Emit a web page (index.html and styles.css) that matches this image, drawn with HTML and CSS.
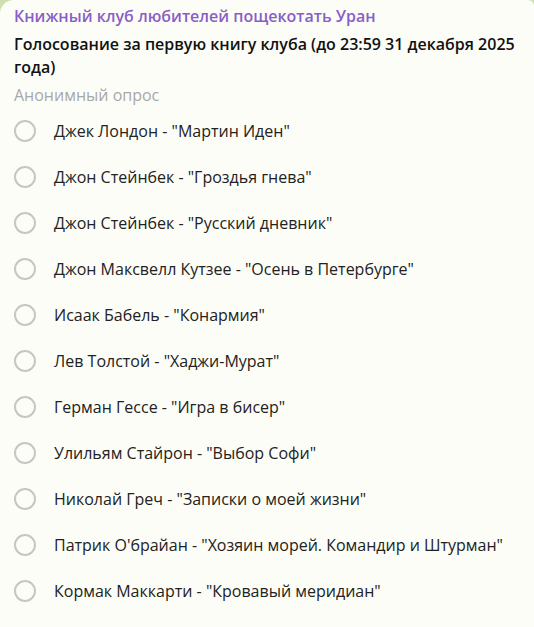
FILE: index.html
```html
<!DOCTYPE html>
<html lang="ru">
<head>
<meta charset="utf-8">
<link rel="stylesheet" href="styles.css">
</head>
<body>
<div class="bubble">
  <div class="author">Книжный клуб любителей пощекотать Уран</div>
  <div class="question">Голосование за первую книгу клуба (до 23:59 31 декабря 2025 года)</div>
  <div class="kind">Анонимный опрос</div>
  <ul class="options">
    <li class="opt"><span class="radio"></span><span>Джек Лондон - "Мартин Иден"</span></li>
    <li class="opt"><span class="radio"></span><span>Джон Стейнбек - "Гроздья гнева"</span></li>
    <li class="opt"><span class="radio"></span><span>Джон Стейнбек - "Русский дневник"</span></li>
    <li class="opt"><span class="radio"></span><span>Джон Максвелл Кутзее - "Осень в Петербурге"</span></li>
    <li class="opt"><span class="radio"></span><span>Исаак Бабель - "Конармия"</span></li>
    <li class="opt"><span class="radio"></span><span>Лев Толстой - "Хаджи-Мурат"</span></li>
    <li class="opt"><span class="radio"></span><span>Герман Гессе - "Игра в бисер"</span></li>
    <li class="opt"><span class="radio"></span><span>Улильям Стайрон - "Выбор Софи"</span></li>
    <li class="opt"><span class="radio"></span><span>Николай Греч - "Записки о моей жизни"</span></li>
    <li class="opt"><span class="radio"></span><span>Патрик О'брайан - "Хозяин морей. Командир и Штурман"</span></li>
    <li class="opt"><span class="radio"></span><span>Кормак Маккарти - "Кровавый меридиан"</span></li>
  </ul>
</div>
</body>
</html>
```
FILE: styles.css
```css
html, body {
  margin: 0;
  padding: 0;
  background: #cfe0ad;
  height: 100%;
}
body {
  font-family: "Open Sans", "Noto Sans", sans-serif;
  overflow: hidden;
}
.bubble {
  background: #fdfdf7;
  min-height: 627px;
  border-radius: 14px 6px 0 0;
  padding: 5px 14px 0 14px;
  box-sizing: border-box;
}
.author {
  color: #8a5ec8;
  font-size: 16px;
  font-weight: 600;
  line-height: 22px;
}
.question {
  color: #111;
  font-size: 16px;
  font-weight: 600;
  line-height: 23px;
  margin-top: 6px;
}
.kind {
  color: #a8a8a8;
  font-size: 16px;
  line-height: 22px;
  margin-top: 5px;
}
.options {
  list-style: none;
  margin: 2px 0 0 0;
  padding: 0;
}
.opt {
  display: flex;
  align-items: center;
  height: 46px;
  color: #222;
  font-size: 16px;
}
.radio {
  width: 18px;
  height: 18px;
  border: 2px solid #c6c6c6;
  border-radius: 50%;
  margin-right: 18px;
  flex: none;
}
```
